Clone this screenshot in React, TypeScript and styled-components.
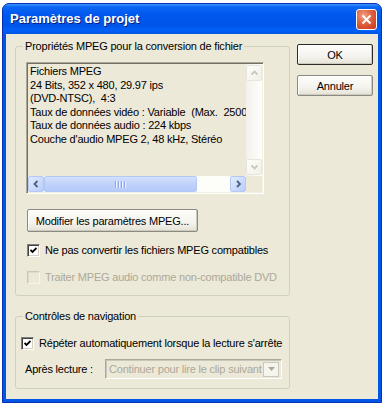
import React from "react";
import styled, { createGlobalStyle } from "styled-components";

const Global = createGlobalStyle`
  html, body { margin: 0; padding: 0; background: #ffffff; }
  body { font-family: "Liberation Sans", Arial, sans-serif; font-size: 11px; letter-spacing: -0.2px; color: #000; }
  * { box-sizing: border-box; }
`;

const Window = styled.div`
  width: 380px;
  height: 400px;
  margin: 3px 0 0 2px;
  display: flex;
  flex-direction: column;
  border: 1px solid #0a2fb4;
  border-radius: 7px 7px 0 0;
  background: #0055e5;
  overflow: hidden;
`;

const TitleBar = styled.div`
  height: 30px;
  flex: none;
  display: flex;
  align-items: center;
  justify-content: space-between;
  padding: 0 4px 0 7px;
  background: linear-gradient(
    to bottom,
    #3d95ff 0%,
    #0a66f5 10%,
    #0058ee 35%,
    #0054e8 70%,
    #0061f8 88%,
    #0054e3 100%
  );
`;

const Title = styled.span`
  font-family: "Liberation Sans", Arial, sans-serif;
  font-weight: bold;
  font-size: 13px;
  letter-spacing: 0;
  color: #ffffff;
  text-shadow: 1px 1px 0 #0a1f7a;
  margin-top: -1px;
`;

const CloseButton = styled.div`
  width: 21px;
  height: 21px;
  border: 1px solid #ffffff;
  border-radius: 3px;
  background: radial-gradient(circle at 35% 30%, #f0a088 0%, #e0603f 45%, #c5361c 100%);
  display: flex;
  align-items: center;
  justify-content: center;
`;

const Frame = styled.div`
  flex: 1;
  display: flex;
  padding: 0 3px 3px 3px;
  min-height: 0;
`;

const Client = styled.div`
  flex: 1;
  background: #ece9d8;
  display: flex;
  flex-direction: row;
  gap: 7px;
  padding: 6px 5px 0 9px;
`;

const LeftColumn = styled.div`
  width: 275px;
  display: flex;
  flex-direction: column;
  gap: 14px;
`;

const RightColumn = styled.div`
  width: 76px;
  display: flex;
  flex-direction: column;
  gap: 10px;
  padding-top: 4px;
`;

const Group = styled.fieldset<{ $h: number }>`
  margin: 0;
  padding: 0 5px;
  min-width: 0;
  height: ${(p) => p.$h}px;
  border: 1px solid #d0d0bf;
  border-radius: 3px;
  display: flex;
  flex-direction: column;
`;

const Legend = styled.legend`
  margin-left: 2px;
  padding: 0 2px;
  line-height: 13px;
  font-size: 11px;
`;

const GroupBody = styled.div<{ $pt: number; $pl: number }>`
  display: flex;
  flex-direction: column;
  padding-top: ${(p) => p.$pt}px;
  padding-left: ${(p) => p.$pl}px;
`;

const ListBox = styled.div`
  width: 238px;
  height: 132px;
  border: 1px solid;
  border-color: #aca899 #ffffff #ffffff #aca899;
  box-shadow: inset 1px 1px 0 #716f64, inset -1px -1px 0 #f1efe2;
  padding: 1px;
  display: grid;
  grid-template-columns: 1fr 16px;
  grid-template-rows: 1fr 16px;
  background: #ece9d8;
`;

const ListText = styled.div`
  overflow: hidden;
  white-space: pre;
  padding: 1px 0 0 2px;
  line-height: 13.6px;
  font-size: 11px;
`;

const VScroll = styled.div`
  display: flex;
  flex-direction: column;
  justify-content: space-between;
  background: linear-gradient(to right, #f3f1ec, #fefefb);
  padding: 1px 0;
`;

const HScroll = styled.div`
  display: flex;
  align-items: stretch;
  background: #fdfdfa;
`;

const Corner = styled.div`
  background: #ece9d8;
`;

const ArrowBtn = styled.div<{ $disabled?: boolean }>`
  width: 16px;
  height: 16px;
  flex: none;
  display: flex;
  align-items: center;
  justify-content: center;
  border-radius: 2px;
  border: 1px solid ${(p) => (p.$disabled ? "#e8e6dc" : "#b4c8f6")};
  background: ${(p) =>
    p.$disabled
      ? "linear-gradient(to bottom right, #fdfdfb, #f1f0ea)"
      : "linear-gradient(to bottom right, #e2ebfe, #b9cdfb)"};
`;

const Thumb = styled.div`
  width: 153px;
  flex: none;
  border: 1px solid #b4c8f6;
  border-radius: 2px;
  background: linear-gradient(to bottom, #d4e0fd, #c0d2fb 50%, #b5cafa);
  display: flex;
  align-items: center;
  justify-content: center;
  gap: 1px;
`;

const Grip = styled.span`
  width: 1px;
  height: 7px;
  background: #8aa6e8;
  box-shadow: 1px 0 0 #eef3ff;
  margin-right: 1px;
`;

const Track = styled.div`
  flex: 1;
`;

const PushButton = styled.div<{ $w: number; $h: number; $default?: boolean }>`
  width: ${(p) => p.$w}px;
  height: ${(p) => p.$h}px;
  flex: none;
  display: flex;
  align-items: center;
  justify-content: center;
  border: 1px solid ${(p) => (p.$default ? "#2b2b2b" : "#8c8a80")};
  border-radius: 2px;
  background: linear-gradient(to bottom, #fdfdfb 0%, #f4f3ee 60%, #e4e2d6 100%);
  box-shadow: inset -1px -1px 0 #cdcac0, inset 1px 1px 0 #ffffff;
  font-size: 11px;
  color: #000;
  white-space: nowrap;
`;

const CheckRow = styled.div<{ $disabled?: boolean }>`
  display: flex;
  align-items: center;
  gap: 5px;
  height: 13px;
  line-height: 13px;
  color: ${(p) => (p.$disabled ? "#aca899" : "#000")};
  white-space: nowrap;
`;

const CheckBox = styled.div<{ $disabled?: boolean }>`
  width: 13px;
  height: 13px;
  flex: none;
  border: 1px solid;
  border-color: ${(p) =>
    p.$disabled ? "#cac8bb #f6f5ef #f6f5ef #cac8bb" : "#808080 #ffffff #ffffff #808080"};
  box-shadow: ${(p) =>
    p.$disabled ? "inset 1px 1px 0 #dcdacc" : "inset 1px 1px 0 #404040, inset -1px -1px 0 #d4d0c8"};
  background: ${(p) => (p.$disabled ? "#ece9d8" : "#ffffff")};
  display: flex;
  align-items: center;
  justify-content: center;
`;

const ComboRow = styled.div`
  display: flex;
  align-items: center;
  padding-left: 4px;
  margin-top: 9px;
  white-space: nowrap;
`;

const ComboLabel = styled.span`
  width: 80px;
  flex: none;
`;

const Combo = styled.div`
  width: 177px;
  height: 20px;
  flex: none;
  border: 1px solid;
  border-color: #aca899 #ffffff #ffffff #aca899;
  box-shadow: inset 1px 1px 0 #c9c7ba;
  display: flex;
  align-items: center;
  padding: 2px 2px 2px 3px;
  color: #aca899;
  background: #ece9d8;
`;

const ComboText = styled.span`
  flex: 1;
  overflow: hidden;
  white-space: nowrap;
`;

const ComboArrow = styled.div`
  width: 16px;
  height: 15px;
  flex: none;
  border: 1px solid #cac8bb;
  background: #f5f4ef;
  display: flex;
  align-items: center;
  justify-content: center;
`;

const Spacer = styled.div<{ $h: number }>`
  height: ${(p) => p.$h}px;
  flex: none;
`;

const Chevron = ({ dir, color }: { dir: "up" | "down" | "left" | "right"; color: string }) => {
  const d =
    dir === "up"
      ? "M1.5 5.5 L4.5 2.5 L7.5 5.5"
      : dir === "down"
      ? "M1.5 2.5 L4.5 5.5 L7.5 2.5"
      : dir === "left"
      ? "M5.5 1 L2.5 4 L5.5 7"
      : "M3 1 L6 4 L3 7";
  return (
    <svg width="9" height="8" viewBox="0 0 9 8">
      <path d={d} fill="none" stroke={color} strokeWidth="1.8" />
    </svg>
  );
};

const Check = () => (
  <svg width="7" height="7" viewBox="0 0 7 7">
    <path d="M0.5 3 L2.5 5 L6.5 1" fill="none" stroke="#000" strokeWidth="1.8" />
  </svg>
);

const lines = [
  "Fichiers MPEG",
  "24 Bits, 352 x 480, 29.97 ips",
  "(DVD-NTSC),  4:3",
  "Taux de données vidéo : Variable  (Max.  2500 kbps)",
  "Taux de données audio : 224 kbps",
  "Couche d'audio MPEG 2, 48 kHz, Stéréo",
];

export default function App() {
  return (
    <>
      <Global />
      <Window>
        <TitleBar>
          <Title>Paramètres de projet</Title>
          <CloseButton>
            <svg width="11" height="11" viewBox="0 0 11 11">
              <path d="M1.5 1.5 L9.5 9.5 M9.5 1.5 L1.5 9.5" stroke="#fff" strokeWidth="2" />
            </svg>
          </CloseButton>
        </TitleBar>
        <Frame>
          <Client>
            <LeftColumn>
              <Group $h={256}>
                <Legend>Propriétés MPEG pour la conversion de fichier</Legend>
                <GroupBody $pt={9} $pl={5}>
                  <ListBox>
                    <ListText>{lines.join("\n")}</ListText>
                    <VScroll>
                      <ArrowBtn $disabled>
                        <Chevron dir="up" color="#cac8bb" />
                      </ArrowBtn>
                      <ArrowBtn $disabled>
                        <Chevron dir="down" color="#cac8bb" />
                      </ArrowBtn>
                    </VScroll>
                    <HScroll>
                      <ArrowBtn>
                        <Chevron dir="left" color="#4d6185" />
                      </ArrowBtn>
                      <Thumb>
                        <Grip />
                        <Grip />
                        <Grip />
                        <Grip />
                      </Thumb>
                      <Track />
                      <ArrowBtn>
                        <Chevron dir="right" color="#4d6185" />
                      </ArrowBtn>
                    </HScroll>
                    <Corner />
                  </ListBox>
                  <Spacer $h={15} />
                  <PushButton $w={171} $h={23} style={{ marginLeft: 1 }}>
                    Modifier les paramètres MPEG...
                  </PushButton>
                  <Spacer $h={12} />
                  <CheckRow style={{ marginLeft: 1 }}>
                    <CheckBox>
                      <Check />
                    </CheckBox>
                    Ne pas convertir les fichiers MPEG compatibles
                  </CheckRow>
                  <Spacer $h={14} />
                  <CheckRow $disabled style={{ marginLeft: 1 }}>
                    <CheckBox $disabled />
                    Traiter MPEG audio comme non-compatible DVD
                  </CheckRow>
                </GroupBody>
              </Group>
              <Group $h={79}>
                <Legend>Contrôles de navigation</Legend>
                <GroupBody $pt={14} $pl={0}>
                  <CheckRow>
                    <CheckBox>
                      <Check />
                    </CheckBox>
                    Répéter automatiquement lorsque la lecture s'arrête
                  </CheckRow>
                  <ComboRow>
                    <ComboLabel>Après lecture :</ComboLabel>
                    <Combo>
                      <ComboText>Continuer pour lire le clip suivant</ComboText>
                      <ComboArrow>
                        <svg width="7" height="4" viewBox="0 0 7 4">
                          <path d="M0 0 L7 0 L3.5 4 Z" fill="#aca899" />
                        </svg>
                      </ComboArrow>
                    </Combo>
                  </ComboRow>
                </GroupBody>
              </Group>
            </LeftColumn>
            <RightColumn>
              <PushButton $w={76} $h={21} $default>
                OK
              </PushButton>
              <PushButton $w={76} $h={21}>
                Annuler
              </PushButton>
            </RightColumn>
          </Client>
        </Frame>
      </Window>
    </>
  );
}
